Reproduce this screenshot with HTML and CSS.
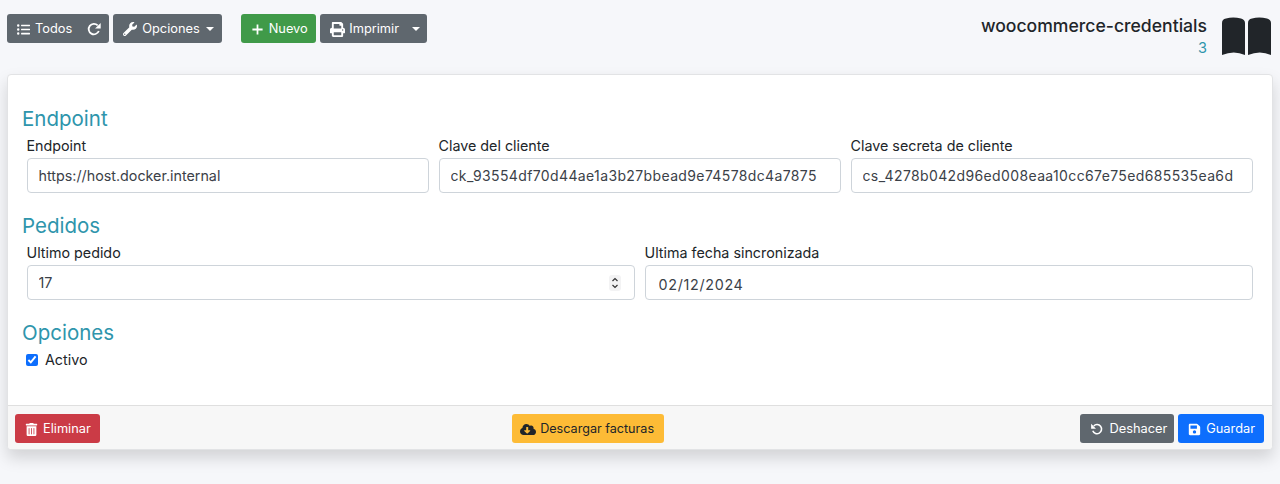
FILE: index.html
```html
<!DOCTYPE html>
<html lang="es">
<head>
  <meta charset="UTF-8">
  <title>woocommerce-credentials</title>
  <meta name="viewport" content="width=device-width, initial-scale=1.0">
  <link rel="stylesheet" href="styles.css">
</head>
<body>

  <header class="toolbar">
    <div class="actions">
      <div class="btn-group">
        <a class="btn btn-gray btn-all" href="#">
          <svg class="icon" viewBox="0 0 512 512"><path d="M48 48a48 48 0 1 0 48 48 48 48 0 0 0-48-48zm0 160a48 48 0 1 0 48 48 48 48 0 0 0-48-48zm0 160a48 48 0 1 0 48 48 48 48 0 0 0-48-48zm448 16H176a16 16 0 0 0-16 16v32a16 16 0 0 0 16 16h320a16 16 0 0 0 16-16v-32a16 16 0 0 0-16-16zm0-320H176a16 16 0 0 0-16 16v32a16 16 0 0 0 16 16h320a16 16 0 0 0 16-16V80a16 16 0 0 0-16-16zm0 160H176a16 16 0 0 0-16 16v32a16 16 0 0 0 16 16h320a16 16 0 0 0 16-16v-32a16 16 0 0 0-16-16z"/></svg>
          Todos
        </a>
        <a class="btn btn-gray btn-reload" href="#">
          <svg class="icon" viewBox="0 0 16 16"><path class="line" d="M12.6 9.6A5.6 5.6 0 1 1 11.4 3.6"/><path d="M14.6 1v6h-6z"/></svg>
        </a>
      </div>
      <a class="btn btn-gray btn-options" href="#">
        <svg class="icon" viewBox="0 0 512 512"><path d="M507.73 109.1c-2.24-9.03-13.54-12.09-20.12-5.51l-74.36 74.36-67.88-11.31-11.31-67.88 74.36-74.36c6.62-6.62 3.43-17.9-5.66-20.16-47.38-11.74-99.55.91-136.58 37.93-39.64 39.64-50.55 97.1-34.05 147.2L18.74 402.76c-24.99 24.99-24.99 65.51 0 90.5 24.99 24.99 65.51 24.99 90.5 0l213.21-213.21c50.12 16.71 107.47 5.68 147.37-34.22 37.07-37.07 49.7-89.32 37.91-136.73zM64 472c-13.25 0-24-10.75-24-24 0-13.26 10.75-24 24-24s24 10.74 24 24c0 13.25-10.75 24-24 24z"/></svg>
        Opciones
        <span class="caret"></span>
      </a>
      <a class="btn btn-green btn-new" href="#">
        <svg class="icon" viewBox="0 0 14 14"><path class="line" d="M7 1.5v11M1.5 7h11"/></svg>
        Nuevo
      </a>
      <div class="btn-group">
        <a class="btn btn-gray btn-print" href="#">
          <svg class="icon" viewBox="0 0 512 512"><path d="M448 192V77.25c0-8.49-3.37-16.62-9.37-22.63L393.37 9.37c-6-6-14.14-9.37-22.63-9.37H96C78.33 0 64 14.33 64 32v160c-35.35 0-64 28.65-64 64v112c0 8.84 7.16 16 16 16h48v96c0 17.67 14.33 32 32 32h320c17.67 0 32-14.33 32-32v-96h48c8.84 0 16-7.16 16-16V256c0-35.35-28.65-64-64-64zm-64 256H128v-96h256v96zm0-224H128V64h192v48c0 8.84 7.16 16 16 16h48v96zm48 72c-13.25 0-24-10.75-24-24 0-13.26 10.75-24 24-24s24 10.74 24 24c0 13.25-10.75 24-24 24z"/></svg>
          Imprimir
        </a>
        <a class="btn btn-gray btn-split" href="#"><span class="caret"></span></a>
      </div>
    </div>
    <div class="title-box">
      <div class="title-text">
        <h1>woocommerce-credentials</h1>
        <span class="count">3</span>
      </div>
      <svg class="book" viewBox="0 0 54 42"><path d="M2 8Q2 4 6 3.5Q13 1.5 21 3.5Q25 4.5 25 8V40Q14 35 2 40Z"/><path d="M28 8Q28 4 32 3.5Q39 1.5 47 3.5Q51 4.5 51 8V40Q40 35 28 40Z"/></svg>
    </div>
  </header>

  <main class="card">
    <form class="card-body">
      <h2>Endpoint</h2>
      <div class="row">
        <div class="field">
          <label for="endpoint">Endpoint</label>
          <input type="text" id="endpoint" value="https://host.docker.internal">
        </div>
        <div class="field">
          <label for="key">Clave del cliente</label>
          <input class="token" type="text" id="key" value="ck_93554df70d44ae1a3b27bbead9e74578dc4a7875">
        </div>
        <div class="field">
          <label for="secret">Clave secreta de cliente</label>
          <input class="token" type="text" id="secret" value="cs_4278b042d96ed008eaa10cc67e75ed685535ea6d">
        </div>
      </div>

      <h2>Pedidos</h2>
      <div class="row">
        <div class="field">
          <label for="last-order">Ultimo pedido</label>
          <div class="spin-wrap">
            <input type="text" id="last-order" value="17">
            <svg class="spinner" viewBox="0 0 12 16"><rect width="12" height="16" rx="3" fill="#f3f3f4"/><path d="M3.5 6 6 3.5 8.5 6M3.5 10 6 12.5 8.5 10" fill="none" stroke="#333" stroke-width="1.2"/></svg>
          </div>
        </div>
        <div class="field">
          <label for="last-date">Ultima fecha sincronizada</label>
          <input class="date" type="text" id="last-date" value="02/12/2024">
        </div>
      </div>

      <h2>Opciones</h2>
      <label class="check"><input type="checkbox" checked> Activo</label>
    </form>

    <footer class="card-footer">
      <a class="btn btn-red" href="#">
        <svg class="icon" viewBox="0 0 448 512"><path d="M32 464a48 48 0 0 0 48 48h288a48 48 0 0 0 48-48V128H32zm272-256a16 16 0 0 1 32 0v224a16 16 0 0 1-32 0zm-96 0a16 16 0 0 1 32 0v224a16 16 0 0 1-32 0zm-96 0a16 16 0 0 1 32 0v224a16 16 0 0 1-32 0zM432 32H312l-9.4-18.7A24 24 0 0 0 281.1 0H166.8a23.72 23.72 0 0 0-21.4 13.3L136 32H16A16 16 0 0 0 0 48v32a16 16 0 0 0 16 16h416a16 16 0 0 0 16-16V48a16 16 0 0 0-16-16z"/></svg>
        Eliminar
      </a>
      <a class="btn btn-yellow" href="#">
        <svg class="icon icon-wide" viewBox="0 0 640 512"><path d="M537.6 226.6c4.1-10.7 6.4-22.4 6.4-34.6 0-53-43-96-96-96-19.7 0-38.1 6-53.3 16.2C367 64.2 315.3 32 256 32c-88.4 0-160 71.6-160 160 0 2.7.1 5.4.2 8.1C40.2 219.8 0 273.2 0 336c0 79.5 64.5 144 144 144h368c70.7 0 128-57.3 128-128 0-61.9-44-113.6-102.4-125.4zm-132.9 88.7L299.3 420.7c-6.2 6.2-16.4 6.2-22.6 0L171.3 315.3c-10.1-10.1-2.9-27.3 11.3-27.3H248V176c0-8.8 7.2-16 16-16h48c8.8 0 16 7.2 16 16v112h65.4c14.2 0 21.4 17.2 11.3 27.3z"/></svg>
        Descargar facturas
      </a>
      <div class="footer-right">
        <a class="btn btn-gray btn-undo" href="#">
          <svg class="icon" viewBox="0 0 16 16"><path class="line" d="M3.4 9.6A5.6 5.6 0 1 0 4.6 3.6"/><path d="M1.4 1v6h6z"/></svg>
          Deshacer
        </a>
        <a class="btn btn-blue" href="#">
          <svg class="icon" viewBox="0 0 448 512"><path d="M433.941 129.941l-83.882-83.882A48 48 0 0 0 316.118 32H48C21.49 32 0 53.49 0 80v352c0 26.51 21.49 48 48 48h352c26.51 0 48-21.49 48-48V163.882a48 48 0 0 0-14.059-33.941zM224 416c-35.346 0-64-28.654-64-64 0-35.346 28.654-64 64-64s64 28.654 64 64c0 35.346-28.654 64-64 64zm96-304.52V212c0 6.627-5.373 12-12 12H76c-6.627 0-12-5.373-12-12V108c0-6.627 5.373-12 12-12h228.52c3.183 0 6.235 1.264 8.485 3.515l3.48 3.48A11.996 11.996 0 0 1 320 111.48z"/></svg>
          Guardar
        </a>
      </div>
    </footer>
  </main>

</body>
</html>
```

FILE: styles.css
```css
* {
  box-sizing: border-box;
}
html, body {
  height: 100%;
}
body {
  font-family: Inter, 'Noto Sans', sans-serif;
  font-size: 14.3px;
  margin: 0;
  padding: 0 7px;
  background: #f6f7fa;
  color: #212529;
  overflow: hidden;
}
.toolbar {
  display: flex;
  justify-content: space-between;
  height: 74px;
  padding-top: 14px;
}
.actions {
  display: flex;
  align-items: flex-start;
  gap: 4px;
}
.btn-group {
  display: flex;
}
.btn {
  display: inline-flex;
  align-items: center;
  gap: 5px;
  height: 29px;
  padding: 1px 9px 0 10px;
  font-size: 12.8px;
  line-height: 1;
  color: #fff;
  text-decoration: none;
  border-radius: 3px;
  white-space: nowrap;
}
.btn-group .btn:first-child {
  border-radius: 3px 0 0 3px;
}
.btn-group .btn:last-child {
  border-radius: 0 3px 3px 0;
}
.btn-gray {
  background: #5f676e;
}
.btn-green {
  background: #409a49;
}
.btn-red {
  background: #cb3b46;
}
.btn-yellow {
  background: #fdbb36;
  color: #212529;
  gap: 4px;
  font-size: 12.6px;
  padding: 1px 10px 0 8px;
  margin-right: 4px;
}
.btn-blue {
  background: #0d6efd;
}
.icon {
  width: 13px;
  height: 13px;
  fill: currentColor;
  flex: none;
}
.icon .line {
  fill: none;
  stroke: currentColor;
  stroke-width: 1.9;
}
.icon-wide {
  width: 16px;
}
.btn-all {
  padding-right: 8px;
}
.btn-reload {
  padding: 1px 7px 0;
}
.btn-reload .icon {
  width: 15px;
  height: 15px;
}
.btn-options {
  margin-right: 15px;
  padding-right: 8px;
}
.btn-options .icon {
  width: 14px;
  height: 14px;
}
.btn-new {
  padding-right: 8.5px;
}
.btn-print {
  gap: 4px;
  padding-right: 4px;
}
.btn-print .icon {
  width: 15px;
  height: 15px;
}
.btn-split {
  padding: 1px 7px 0 8px;
}
.btn-undo {
  padding-right: 7px;
}
.btn-undo .icon {
  margin-right: 1px;
}
.caret {
  display: inline-block;
  margin-left: 1px;
  border-top: 4px solid currentColor;
  border-left: 4px solid transparent;
  border-right: 4px solid transparent;
}
.title-box {
  display: flex;
  gap: 13px;
}
.title-text {
  display: flex;
  flex-direction: column;
  align-items: flex-end;
}
h1 {
  margin: 0;
  font-size: 17.6px;
  font-weight: 500;
  line-height: 24px;
}
.count {
  color: #2e95ac;
  font-size: 14.5px;
  line-height: 20px;
}
.book {
  width: 54px;
  height: 42px;
  margin: 1px -1px 0 0;
  fill: #212529;
}
.card {
  display: flex;
  flex-direction: column;
  height: 376px;
  background: #fff;
  border: 1px solid #e2e3e5;
  border-radius: 4px;
  box-shadow: 0 8px 16px rgba(0, 0, 0, 0.15);
}
.card-body {
  flex: 1;
  padding: 32px 14px 0;
}
h2 {
  margin: 0;
  font-size: 20.5px;
  font-weight: 400;
  line-height: 24px;
  color: #2e95ac;
}
.row {
  display: flex;
  gap: 10px;
  padding: 0 5.5px 0 4.5px;
  margin-bottom: 21px;
}
.field {
  flex: 1;
  min-width: 0;
}
.field label {
  display: block;
  line-height: 17px;
  margin: 6px 0 4px;
}
.field input {
  display: block;
  width: 100%;
  height: 35px;
  padding: 0 11px;
  font-family: inherit;
  font-size: 14.3px;
  color: #3b4148;
  background: #fff;
  border: 1px solid #ced4da;
  border-radius: 4px;
}
.field .token {
  font-size: 14px;
  letter-spacing: 0.37px;
}
.field .date {
  padding: 3px 11px 0 13px;
  letter-spacing: 0.7px;
}
.spin-wrap {
  position: relative;
}
.spinner {
  position: absolute;
  top: 10px;
  right: 14px;
  width: 12px;
  height: 16px;
}
.check {
  display: flex;
  align-items: center;
  gap: 7px;
  margin: 6px 0 0 4px;
}
.check input {
  width: 12px;
  height: 12px;
  margin: 0;
  accent-color: #0d6efd;
}
.card-footer {
  display: flex;
  justify-content: space-between;
  align-items: center;
  height: 44px;
  padding: 2px 8px 0 7px;
  background: #f7f7f7;
  border-top: 1px solid #dfdfdf;
  border-radius: 0 0 4px 4px;
}
.footer-right {
  display: flex;
  gap: 4px;
}
```
